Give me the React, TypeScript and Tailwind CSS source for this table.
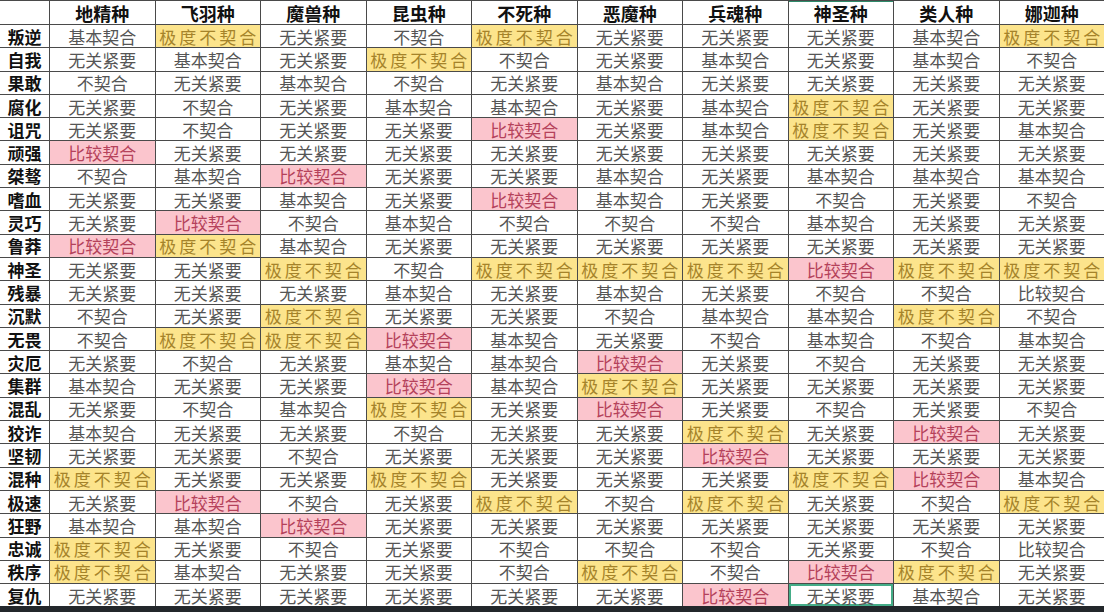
import { Fragment } from "react";

const races = ["地精种", "飞羽种", "魔兽种", "昆虫种", "不死种", "恶魔种", "兵魂种", "神圣种", "类人种", "娜迦种"];

// A 基本契合, B 不契合, C 无关紧要, Y 极度不契合 (yellow), P 比较契合 (pink), p 比较契合 (plain)
const rows: [string, string][] = [
  ["叛逆", "AYCBYCCCAY"],
  ["自我", "CACYBCACAB"],
  ["果敢", "BCABCACCCC"],
  ["腐化", "CBCAACAYCC"],
  ["诅咒", "CBCCPCAYCA"],
  ["顽强", "PCCCCCCCCC"],
  ["桀骜", "BAPCCACAAA"],
  ["嗜血", "CCACPACBCB"],
  ["灵巧", "CPBABBBACC"],
  ["鲁莽", "PYACCCCCCC"],
  ["神圣", "CCYBYYYPYY"],
  ["残暴", "CCCACACBBp"],
  ["沉默", "BCYCCBAAYB"],
  ["无畏", "BYYPACBABA"],
  ["灾厄", "CBCAAPCBCC"],
  ["集群", "ACCPAYCCCC"],
  ["混乱", "CBAYCPCBCB"],
  ["狡诈", "ACCBCCYCPC"],
  ["坚韧", "CCBCCCPCCC"],
  ["混种", "YCCYCCCYPA"],
  ["极速", "CPBCYBYCBY"],
  ["狂野", "AAPCCCCCCC"],
  ["忠诚", "YCBCBBBCBp"],
  ["秩序", "YACCBYBPYC"],
  ["复仇", "CCCCCCPCAC"],
];

const labels: Record<string, string> = {
  A: "基本契合",
  B: "不契合",
  C: "无关紧要",
  Y: "极度不契合",
  P: "比较契合",
  p: "比较契合",
};

const cellStyle = (code: string) => {
  if (code === "Y") return "bg-[#fce48c] text-[#a5832a] tracking-[3px] pl-[3px]";
  if (code === "P") return "bg-[#fbc5cd] text-[#b5425b]";
  return "bg-white text-[#555555]";
};

export default function App() {
  return (
    <div
      className="flex h-[612px] w-[1104px] flex-col overflow-hidden bg-white"
      style={{ fontFamily: '"Noto Sans CJK SC", sans-serif' }}
    >
      <div className="grid w-[1104px] grid-cols-[49px_repeat(10,minmax(0,1fr))] grid-rows-[23px_repeat(25,22.3px)] gap-px bg-[#4a4a4a] pt-px">
        <div className="bg-white" />
        {races.map((r) => (
          <div
            key={r}
            className={`flex items-center justify-center bg-white text-[18px] font-bold leading-none text-[#111] ${
              r === "神圣种" ? "shadow-[inset_0_1px_0_#2e8a6a]" : ""
            }`}
          >
            {r}
          </div>
        ))}
        {rows.map(([name, codes], ri) => (
          <Fragment key={name}>
            <div className="flex items-center justify-center bg-white text-[17px] font-bold leading-none text-[#111]">
              {name}
            </div>
            {codes.split("").map((c, ci) => (
              <div
                key={ci}
                className={`flex items-center justify-center text-[17px] leading-none ${cellStyle(c)} ${
                  ri === rows.length - 1 && ci === 7 ? "shadow-[inset_0_0_0_2px_#45ad88]" : ""
                }`}
              >
                {labels[c]}
              </div>
            ))}
          </Fragment>
        ))}
      </div>
      <div className="flex-1 bg-[#23272b]" />
    </div>
  );
}
